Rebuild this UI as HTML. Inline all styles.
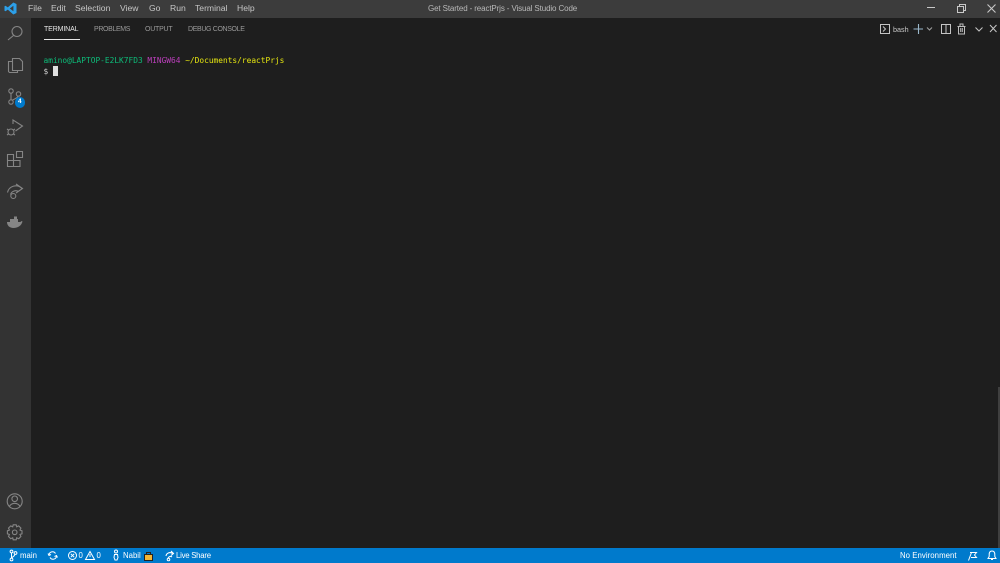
<!DOCTYPE html>
<html><head><meta charset="utf-8"><style>
html,body{margin:0;padding:0}
body{width:1000px;height:563px;overflow:hidden;background:#1e1e1e;position:relative;font-family:"Liberation Sans",sans-serif}
.a{position:absolute;white-space:nowrap}
svg{position:absolute;overflow:visible;fill:none}
.m{top:3px;font-size:8.6px;line-height:11px;color:#c6c6c6}
.t{top:25px;font-size:7px;line-height:10px;color:#9a9a9a}
.s{top:550px;font-size:7.8px;line-height:11px;color:#fff}
.mono{font-family:"DejaVu Sans Mono","Liberation Mono",monospace;font-size:7.85px;line-height:11px}
</style></head><body>
<div class="a" style="left:0;top:0;width:1000px;height:18px;background:#3c3c3c"></div>
<div class="a" style="left:0;top:18px;width:31px;height:530px;background:#333"></div>
<div class="a" style="left:0;top:548px;width:1000px;height:15px;background:#007acc"></div>

<svg style="left:4px;top:2px" width="13" height="13" viewBox="0 0 13 13"><path d="M9.3.5 12.5 2v9L9.3 12.5 3.8 7.6 1.5 9.3.5 8.8V4.2L1.5 3.7 3.8 5.4zM9.4 3.7 5.8 6.5 9.4 9.3z" fill="#2c9fe8" fill-rule="evenodd"/></svg>
<div class="a m" style="left:28px">File</div>
<div class="a m" style="left:51px">Edit</div>
<div class="a m" style="left:75px">Selection</div>
<div class="a m" style="left:120px">View</div>
<div class="a m" style="left:149px">Go</div>
<div class="a m" style="left:170px">Run</div>
<div class="a m" style="left:195px">Terminal</div>
<div class="a m" style="left:237px">Help</div>
<div class="a m" style="left:428px;color:#b8b8b8;font-size:8px;letter-spacing:-.125px">Get Started - reactPrjs - Visual Studio Code</div>
<svg style="left:850px;top:0" width="150" height="18" stroke="#c8c8c8" stroke-width="1"><path d="M77 7.500H85"/><path d="M107.500 6.500h6v6h-6zM109.500 6.500v-2h6v6h-2"/><path d="M137.500 4.500 145.500 12.500M145.500 4.500 137.500 12.500" stroke-width="1.100"/></svg>

<svg style="left:0;top:18px" width="31" height="530" stroke="#858585" stroke-width="1.100">
<circle cx="17" cy="13.500" r="5"/><path d="M13.500 17.500 8 22"/>
<path d="M12.500 40.500h7l3 3v9h-10zM12.500 43.500h-4v10l1 1h8v-2"/>
<circle cx="11" cy="73" r="2.200"/><circle cx="11" cy="84" r="2.200"/><circle cx="18.500" cy="76" r="2.200"/><path d="M11 75.500V81.500M18 78.500Q17 80 12.500 82"/>
<path d="M13 106V102L22.500 108 15.500 113"/><circle cx="11" cy="114" r="3"/><path d="M7 111 8.500 112M15 111 13.500 112M7 117 8.500 116M15 117 13.500 116"/>
<path d="M7.500 136.500h6v6h-6zM7.500 142.500h12.500v6h-12.500zM13.500 142.500v6M16.500 133.500h6v6h-6z"/>
<path d="M7.500 174.500a8.500 8.500 0 0 1 14.500-4M10.500 176.500a5.500 5.500 0 0 1 8-3M16 166l6.500 4.500-6.500 4.500"/><circle cx="13.300" cy="178" r="2.500"/>
<path d="M7 204h13.500c.5-1 1.500-1.200 2-.5-1 4-4.500 6.500-9 6.500-4 0-6.500-2.500-6.500-6z" fill="#858585" stroke="none"/><path d="M10 201h8v3h-8zM14 198.500h3v2.500h-3z" fill="#858585" stroke="none"/>
<circle cx="14.700" cy="483.300" r="7.500"/><circle cx="14.700" cy="480.800" r="2.800"/><path d="M9.200 488.800c1.500-3 3.500-3.500 5.500-3.500s4 .5 5.500 3.500"/>
<g transform="translate(.2 -.7)"><circle cx="14.500" cy="515" r="2.300"/><path d="M13 507.500h3l.5 2 2-.9 2.200 2.200-.9 2 2 .7v3l-2 .7.900 2-2.200 2.200-2-.9-.5 2h-3l-.5-2-2 .9-2.200-2.200.9-2-2-.7v-3l2-.7-.9-2 2.200-2.200 2 .9z"/></g>
</svg>
<div class="a" style="left:14.500px;top:97px;width:10.500px;height:10.500px;border-radius:50%;background:#007acc;color:#fff;font-size:6.500px;font-weight:bold;line-height:10.500px;text-align:center">4</div>

<div class="a t" style="left:44px;color:#e7e7e7;letter-spacing:-.12px">TERMINAL</div>
<div class="a" style="left:44px;top:39px;width:36px;height:1px;background:#e7e7e7"></div>
<div class="a t" style="left:94px;letter-spacing:-.35px">PROBLEMS</div>
<div class="a t" style="left:145px;letter-spacing:-.23px">OUTPUT</div>
<div class="a t" style="left:188px;letter-spacing:-.35px">DEBUG CONSOLE</div>

<svg style="left:850px;top:18px" width="150" height="20" stroke="#c5c5c5" stroke-width="1">
<path d="M30.500 6.500h9v9h-9z"/><path d="M33 8.500 35.500 11 33 13.500"/>
<path d="M63.500 11H73M68.500 6V16" stroke="#9bb8cc" stroke-width="1.100"/>
<path d="M77 9.500 79.500 12 82 9.500" stroke="#a0a0a0"/>
<path d="M91.500 6.500h9v9h-9zM96 6.500v9"/>
<path d="M107.500 8.500h8M108.500 8.500v7.500h6V8.500M110 8V6h3v2M110.700 10v4M112.300 10v4" stroke="#bdbdbd"/>
<path d="M125.500 9.500 129 13 132.500 9.500"/>
<path d="M140 7 146.500 14M146.500 7 140 14"/>
</svg>
<div class="a" style="left:893px;top:24px;font-size:7.200px;line-height:11px;color:#c8c8c8">bash</div>

<div class="a mono" style="left:43.500px;top:55px;color:#0dbc79">amino@LAPTOP-E2LK7FD3 <span style="color:#bc3fbc">MINGW64</span> <span style="color:#e5e510">~/Documents/reactPrjs</span></div>
<div class="a mono" style="left:43.500px;top:65.500px;color:#ccc">$</div>
<div class="a" style="left:53px;top:66px;width:5px;height:10px;background:#e0e0e0"></div>

<div class="a" style="left:998px;top:387px;width:2px;height:161px;background:#3f3f3f"></div>

<svg style="left:0;top:548px" width="1000" height="15" stroke="#fff" stroke-width="1">
<circle cx="11.500" cy="3.500" r="1.400"/><circle cx="11.500" cy="11.500" r="1.400"/><circle cx="15.500" cy="5" r="1.400"/><path d="M11.500 5V10M15 6.500Q14 8.500 12 9.500"/>
<path d="M49 7A3.500 3.500 0 0 1 55.500 5.500M56.500 8A3.500 3.500 0 0 1 50 9.500M48 5.500 49 7.500 51 6.500M57.500 9.500 56.500 7.500 54.500 8.500"/>
<circle cx="72.500" cy="7.500" r="4"/><path d="M70.800 5.800 74.200 9.200M74.200 5.800 70.800 9.200"/>
<path d="M90 3.500 94.500 11.500H85.500zM90 6v3"/>
<circle cx="116" cy="3.500" r="1.500"/><path d="M114.500 6.500h3l.5 3-1 2.500h-2l-1-2.500z"/>
<path d="M144.500 6.500h8v6h-8z" fill="#f2b636" stroke="#222"/><path d="M146.500 6.500V4.500h4V6.500" stroke="#222"/>
<path d="M166 8a4 4 0 0 1 6.500-2.500M168 10.500a2.500 2.500 0 0 1 4-1.500M171 3 173.500 5.500 171 7.500" stroke-width="1.100"/><circle cx="168.500" cy="11.500" r="1.300"/>
<path d="M970 4.500h6.500l-2 2.500 2 2.500H971M971.500 4.500 968.500 12.500"/>
<path d="M992 3c-2 0-2.800 1.500-2.800 3.500v2L988 10.500h8l-1.200-2v-2C994.800 4.500 994 3 992 3zM991 11.500h2"/>
</svg>
<div class="a s" style="left:20px">main</div>
<div class="a s" style="left:78.500px">0</div>
<div class="a s" style="left:96.500px">0</div>
<div class="a s" style="left:123px">Nabil</div>
<div class="a s" style="left:176px;letter-spacing:-.25px">Live Share</div>
<div class="a s" style="left:900px;letter-spacing:.05px">No Environment</div>
</body></html>
